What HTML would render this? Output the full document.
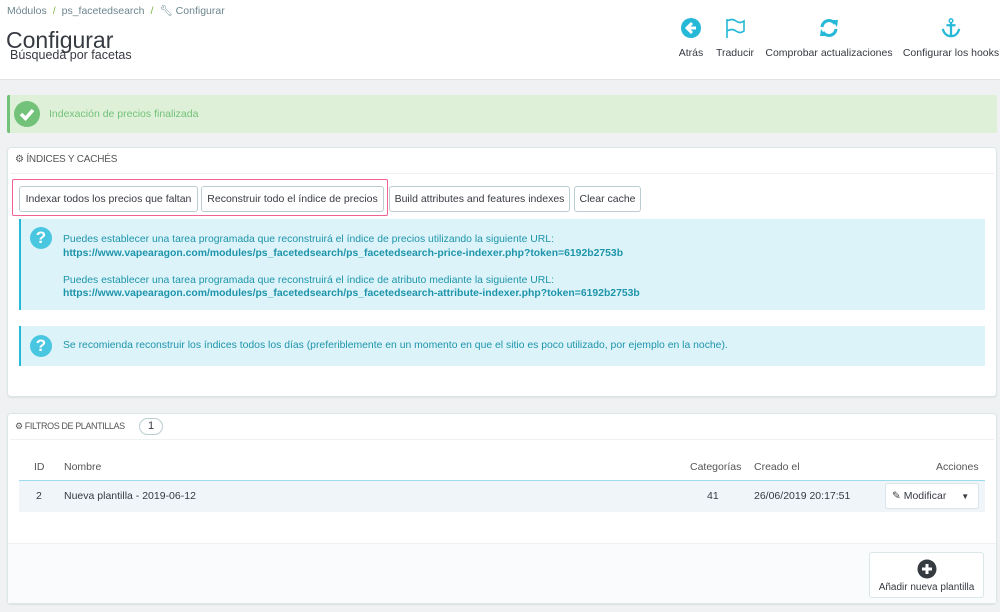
<!DOCTYPE html>
<html><head><meta charset="utf-8"><style>
*{box-sizing:border-box;margin:0;padding:0}
body{width:1000px;height:612px;overflow:hidden;background:#eff1f2;font-family:"Liberation Sans",sans-serif;color:#363a41;position:relative;font-size:10.5px}
.a{position:absolute}
#hdr{left:0;top:0;width:1000px;height:80px;background:#fff;border-bottom:1px solid #dfe3e6}
.bc{left:7px;top:4px;font-size:10.5px;color:#6c868e}
.bc b{color:#7cb342;font-weight:normal;margin:0 6px}
.tb{top:18px;text-align:center;font-size:10.5px;color:#363a41}
.tb svg{display:block;margin:0 auto 9px}
.panel{background:#fff;border:1px solid #dbe6e9;border-radius:4px;box-shadow:0 1px 1px #e0e0e0}
.ptitle{font-size:10.5px;color:#555;text-transform:uppercase}
.btn{position:absolute;top:186px;height:26px;border:1px solid #bbcdd2;border-radius:3px;background:#fff;font-size:10.5px;line-height:24px;text-align:center;color:#363a41}
.info{background:#dcf4f9;border-left:2px solid #25b9d7;color:#1e94ab;font-size:10.4px}
.qm{position:absolute;left:9px;width:22px;height:22px;border-radius:50%;background:#4ac7e0;color:#fff;font-weight:bold;font-size:17px;line-height:22px;text-align:center}
</style></head><body>
<div id="hdr" class="a"></div>
<div class="a bc">Módulos<b>/</b>ps_facetedsearch<b>/</b>🔧︎ Configurar</div>
<div class="a" style="left:6px;top:27px;font-size:23px;color:#363a41">Configurar</div>
<div class="a" style="left:10px;top:48px;font-size:12.5px">Búsqueda por facetas</div>
<div class="a tb" style="left:676px;width:30px"><svg width="20" height="20" viewBox="0 0 20 20"><circle cx="10" cy="10" r="10" fill="#25b9d7"/><path d="M11 5 L6 10 L11 15 M6 10 H15" stroke="#fff" stroke-width="3" fill="none"/></svg>Atrás</div>
<div class="a tb" style="left:713px;width:44px"><svg width="22" height="20" viewBox="0 0 22 20"><path d="M3 1 V20 M3 3 Q8 0 12 3 Q16 6 20 3 V13 Q16 16 12 13 Q8 10 3 13" stroke="#25b9d7" stroke-width="1.6" fill="none"/></svg>Traducir</div>
<div class="a tb" style="left:764px;width:130px"><svg width="22" height="20" viewBox="0 0 22 20"><path d="M4 9 A7 7 0 0 1 17 6 M18 11 A7 7 0 0 1 5 14" stroke="#25b9d7" stroke-width="3" fill="none"/><path d="M14 2 L20 2 L19 9 Z M8 18 L2 18 L3 11 Z" fill="#25b9d7"/></svg>Comprobar actualizaciones</div>
<div class="a tb" style="left:902px;width:98px"><svg width="22" height="20" viewBox="0 0 22 22"><circle cx="11" cy="3" r="2" stroke="#25b9d7" stroke-width="1.6" fill="none"/><path d="M11 5 V20 M6 8 H16 M2 12 Q4 20 11 20 Q18 20 20 12" stroke="#25b9d7" stroke-width="2.5" fill="none"/></svg>Configurar los hooks</div>

<div class="a" style="left:7px;top:95px;width:990px;height:38px;background:#dff0d8;border-left:3px solid #72c279;border-radius:2px"></div>
<div class="a" style="left:14px;top:101px;width:26px;height:26px;border-radius:50%;background:#72c279"><svg width="26" height="26" viewBox="0 0 26 26"><path d="M7 13 L11.5 17.5 L19 9" stroke="#fff" stroke-width="3.5" fill="none"/></svg></div>
<div class="a" style="left:49px;top:108px;color:#72c279;font-size:10.5px">Indexación de precios finalizada</div>

<div class="a panel" style="left:7px;top:147px;width:990px;height:250px"></div>
<div class="a ptitle" style="left:15px;top:154px;font-size:10px;letter-spacing:-0.2px">⚙ Índices y cachés</div>
<div class="a" style="left:10px;top:173px;width:984px;height:1px;background:#eef1f2"></div>
<div class="a" style="left:12px;top:179px;width:376px;height:37px;border:1px solid #f06292;border-radius:2px"></div>
<div class="btn" style="left:19px;width:179px">Indexar todos los precios que faltan</div>
<div class="btn" style="left:201px;width:183px">Reconstruir todo el índice de precios</div>
<div class="btn" style="left:389px;width:181px">Build attributes and features indexes</div>
<div class="btn" style="left:574px;width:67px">Clear cache</div>

<div class="a info" style="left:19px;top:219px;width:966px;height:91px"><div class="qm" style="top:8px">?</div>
<div style="position:absolute;left:42px;top:14px;line-height:13.5px">Puedes establecer una tarea programada que reconstruirá el índice de precios utilizando la siguiente URL:<br><b>https://www.vapearagon.com/modules/ps_facetedsearch/ps_facetedsearch-price-indexer.php?token=6192b2753b</b><br><br>Puedes establecer una tarea programada que reconstruirá el índice de atributo mediante la siguiente URL:<br><b>https://www.vapearagon.com/modules/ps_facetedsearch/ps_facetedsearch-attribute-indexer.php?token=6192b2753b</b></div></div>
<div class="a info" style="left:19px;top:326px;width:966px;height:40px"><div class="qm" style="top:9px">?</div>
<div style="position:absolute;left:42px;top:14px">Se recomienda reconstruir los índices todos los días (preferiblemente en un momento en que el sitio es poco utilizado, por ejemplo en la noche).</div></div>

<div class="a panel" style="left:7px;top:413px;width:990px;height:191px"></div>
<div class="a ptitle" style="left:15px;top:421px;font-size:9px;letter-spacing:-0.4px">⚙ Filtros de plantillas</div>
<div class="a" style="left:139px;top:418px;width:24px;height:17px;border:1px solid #bbcdd2;border-radius:9px;text-align:center;line-height:15px;font-size:11px;background:#fff">1</div>
<div class="a" style="left:10px;top:439px;width:984px;height:1px;background:#eef1f2"></div>
<div class="a" style="left:34px;top:461px;color:#555">ID</div>
<div class="a" style="left:64px;top:461px;color:#555">Nombre</div>
<div class="a" style="left:690px;top:461px;color:#555">Categorías</div>
<div class="a" style="left:754px;top:461px;color:#555">Creado el</div>
<div class="a" style="left:936px;top:461px;color:#555">Acciones</div>
<div class="a" style="left:19px;top:480px;width:966px;height:32px;background:#eff5f9;border-top:1px solid #9ddcec"></div>
<div class="a" style="left:36px;top:490px">2</div>
<div class="a" style="left:64px;top:490px">Nueva plantilla - 2019-06-12</div>
<div class="a" style="left:707px;top:490px">41</div>
<div class="a" style="left:754px;top:490px">26/06/2019 20:17:51</div>
<div class="a" style="left:885px;top:483px;width:94px;height:26px;background:#fff;border:1px solid #dbe6e9;border-radius:3px;line-height:24px;padding-left:6px">✎ Modificar <span style="margin-left:12px;font-size:8px">▼</span></div>
<div class="a" style="left:8px;top:543px;width:988px;height:60px;background:#fafbfc;border-top:1px solid #eef1f2"></div>
<div class="a" style="left:869px;top:552px;width:115px;height:46px;background:#fff;border:1px solid #dbe6e9;border-radius:3px;text-align:center;font-size:10px">
<svg width="20" height="20" viewBox="0 0 20 20" style="display:block;margin:6px auto 3px"><circle cx="10" cy="10" r="9.5" fill="#363a41"/><path d="M10 5 V15 M5 10 H15" stroke="#fff" stroke-width="3"/></svg>Añadir nueva plantilla</div>
</body></html>
